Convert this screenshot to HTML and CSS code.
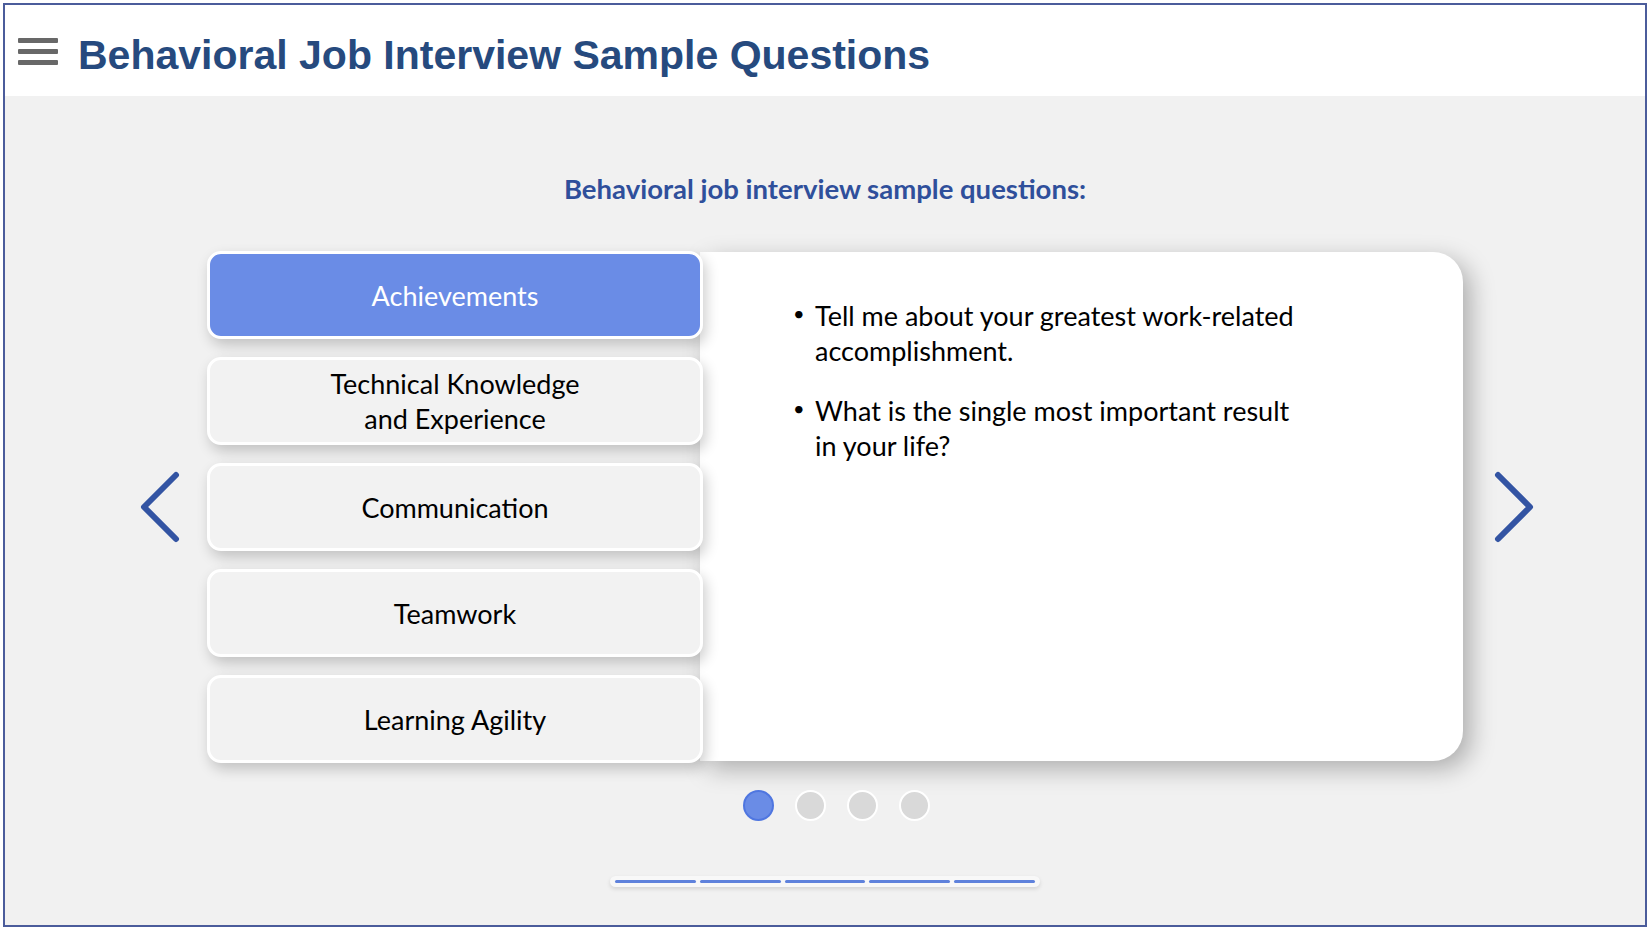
FILE: index.html
```html
<!DOCTYPE html>
<html lang="en">
<head>
  <meta charset="UTF-8" />
  <meta name="viewport" content="width=device-width, initial-scale=1.0" />
  <title>Behavioral Job Interview Sample Questions</title>
  <link rel="stylesheet" href="styles.css">
</head>
<body>
  <div class="frame">
    <header class="topbar">
      <div class="burger"><span></span><span></span><span></span></div>
      <h1>Behavioral Job Interview Sample Questions</h1>
    </header>

    <main class="stage">
      <h2 class="lead">Behavioral job interview sample questions:</h2>

      <div class="carousel">
        <button class="arrow" type="button" aria-label="Previous">
          <svg width="42" height="76" viewBox="0 0 42 76"><path d="M37 6 L5 38 L37 70" /></svg>
        </button>

        <div class="card">
          <div class="tabs">
            <div class="tab active">Achievements</div>
            <div class="tab">Technical Knowledge<br>and Experience</div>
            <div class="tab">Communication</div>
            <div class="tab">Teamwork</div>
            <div class="tab">Learning Agility</div>
          </div>
          <div class="panel">
            <ul class="questions">
              <li>Tell me about your greatest work-related accomplishment.</li>
              <li>What is the single most important result in your life?</li>
            </ul>
          </div>
        </div>

        <button class="arrow next" type="button" aria-label="Next">
          <svg width="42" height="76" viewBox="0 0 42 76"><path d="M5 6 L37 38 L5 70" /></svg>
        </button>
      </div>

      <div class="dots">
        <span class="dot on"></span>
        <span class="dot"></span>
        <span class="dot"></span>
        <span class="dot"></span>
      </div>

      <div class="progress">
        <span></span><span></span><span></span><span></span><span></span>
      </div>
    </main>
  </div>
</body>
</html>
```

FILE: styles.css
```css
* { box-sizing: border-box; }
body { margin: 0; background: #fff; font-family: Lato, "Open Sans", sans-serif; }

.frame { margin: 3px; height: 924px; border: 2px solid #4b5c9b; background: #f1f1f1; display: flex; flex-direction: column; overflow: hidden; }

.topbar { height: 91px; background: #fff; display: flex; align-items: center; padding-left: 13px; flex-shrink: 0; }
.burger { width: 40px; display: flex; flex-direction: column; gap: 6px; margin-top: 2px; }
.burger span { display: block; height: 5px; background: #686868; border-radius: 1px; }
.topbar h1 { margin: 10px 0 0 20px; font-family: "Liberation Sans", Arial, sans-serif; font-size: 41px; font-weight: bold; color: #264a7e; }

.stage { flex: 1; display: flex; flex-direction: column; }
.lead { margin: 76px 0 0 0; text-align: center; font-size: 27.5px; line-height: 34px; font-weight: bold; color: #2f4f9b; }

.carousel { display: flex; align-items: center; margin-top: 45px; padding-left: 134px; }
.arrow { background: none; border: 0; padding: 0; cursor: pointer; display: flex; }
.arrow svg path { fill: none; stroke: #3354a3; stroke-width: 6; stroke-linecap: round; stroke-linejoin: round; }
.arrow.next { margin-left: 30px; }

.card { margin-left: 26px; width: 1256px; height: 512px; display: flex; }
.tabs { width: 496px; display: flex; flex-direction: column; gap: 18px; position: relative; z-index: 1; }
.tab {
  height: 88px;
  border: 3px solid #fff;
  border-radius: 14px;
  background: #f2f2f2;
  box-shadow: 3px 6px 14px rgba(0,0,0,0.2);
  display: flex;
  align-items: center;
  justify-content: center;
  text-align: center;
  font-size: 27px;
  line-height: 35px;
  color: #000;
}
.tab.active { background: #6a8ce6; color: #fff; }

.panel { flex: 1; margin: 1px 0 2px -3px; background: #fff; border-radius: 0 30px 30px 0; box-shadow: 8px 8px 24px rgba(0,0,0,0.28); padding: 46px 0 0 115px; }
.questions { list-style: none; margin: 0; padding: 0; max-width: 495px; }
.questions li { position: relative; font-size: 27px; line-height: 35px; color: #000; margin-bottom: 25px; }
.questions li::before { content: "\2022"; position: absolute; left: -22px; top: -2px; font-size: 20px; }

.dots { display: flex; justify-content: center; gap: 21px; margin-top: 27px; padding-left: 22px; }
.dot { width: 31px; height: 31px; border-radius: 50%; background: #d9d9d9; border: 2px solid #fff; }
.dot.on { background: #6a8ce6; border-color: #4f76e0; }

.progress { align-self: center; margin-top: 55px; width: 430px; height: 11px; padding: 4px 5px; background: #f8f8f8; border-radius: 6px; box-shadow: 0 2px 4px rgba(0,0,0,0.12); display: flex; gap: 4px; }
.progress span { flex: 1; height: 3px; background: #5f82dc; border-radius: 2px; }
```
